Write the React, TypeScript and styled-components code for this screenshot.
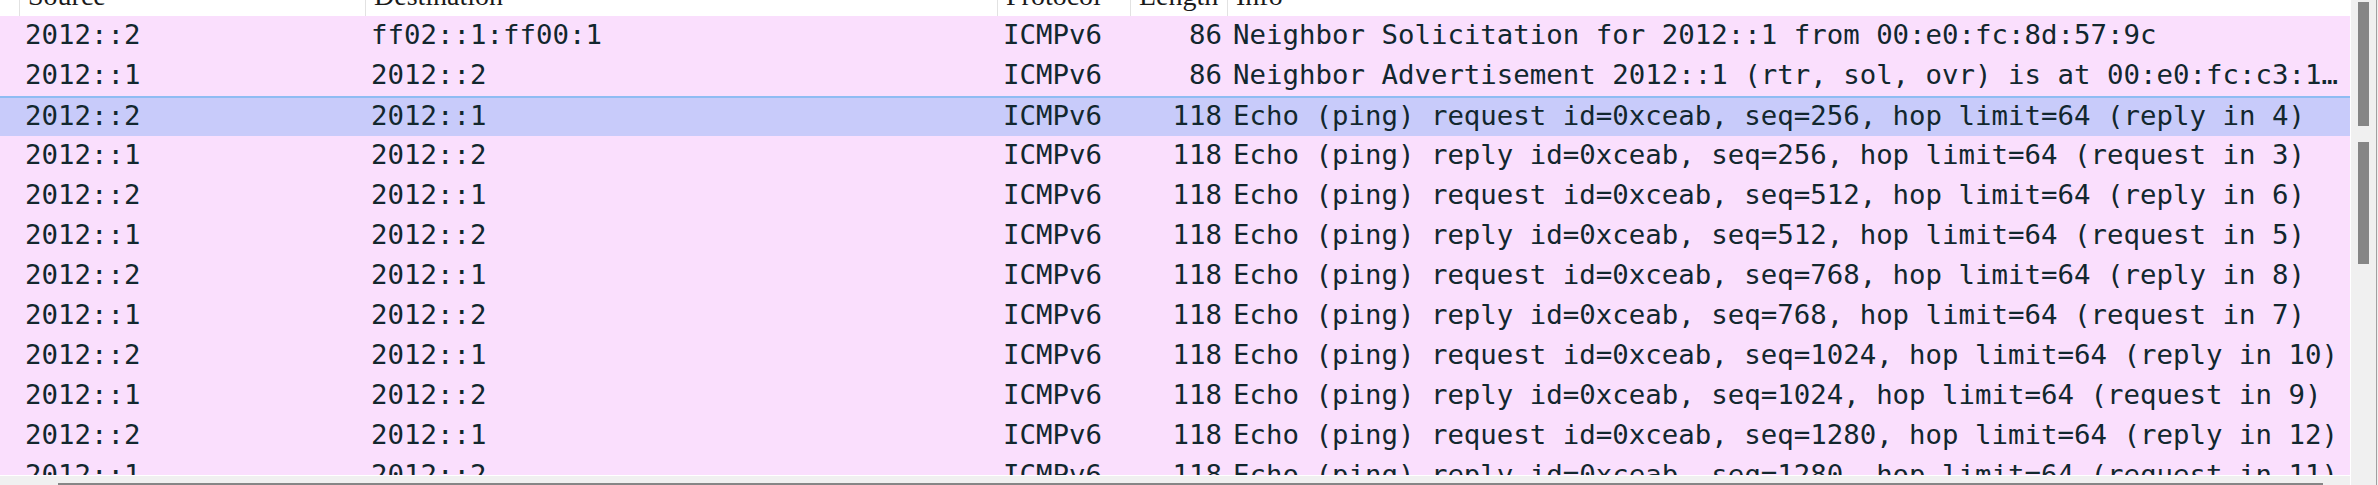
import React from "react";
import styled, { createGlobalStyle } from "styled-components";

const GlobalStyle = createGlobalStyle`
  html, body { margin: 0; padding: 0; background: #ffffff; overflow: hidden; }
  #root { width: 2378px; height: 485px; }
`;

const COLS = "19px 346px 632px 133px 97px 1123px";

const Frame = styled.div`
  display: grid;
  grid-template-columns: 2350px 27px;
  grid-template-rows: 475px 10px;
  width: 2378px;
  height: 485px;
  overflow: hidden;
  background: #f0f0f0;
`;

const TableArea = styled.div`
  grid-column: 1;
  grid-row: 1;
  display: flex;
  flex-direction: column;
  overflow: hidden;
  background: #ffffff;
`;

const HeaderRow = styled.div`
  display: grid;
  grid-template-columns: ${COLS};
  height: 16px;
  flex: none;
  background: #ffffff;
`;

const HeaderCell = styled.div<{ $first?: boolean }>`
  box-sizing: border-box;
  border-left: ${(p) => (p.$first ? "none" : "1px solid #e2e2e2")};
  overflow: hidden;
  padding-left: 8px;
  font-family: "Liberation Serif", serif;
  font-size: 28px;
  line-height: 28px;
  color: #1a1a1a;
  white-space: nowrap;
`;

const HeaderLabel = styled.span`
  display: block;
  margin-top: -18px;
`;

const Row = styled.div<{ $selected?: boolean }>`
  display: grid;
  grid-template-columns: ${COLS};
  height: 40px;
  flex: none;
  box-sizing: border-box;
  background: ${(p) => (p.$selected ? "#c8cbfa" : "#fadffd")};
  border-top: ${(p) => (p.$selected ? "2px solid #8fbcf3" : "0 none")};
  font-family: "DejaVu Sans Mono", monospace;
  font-size: 27.4px;
  line-height: ${(p) => (p.$selected ? "36px" : "38px")};
  color: #12272e;
`;

const Cell = styled.div<{ $right?: boolean }>`
  box-sizing: border-box;
  padding: ${(p) => (p.$right ? "0 5px 0 0" : "0 0 0 6px")};
  text-align: ${(p) => (p.$right ? "right" : "left")};
  white-space: nowrap;
  overflow: hidden;
`;

const VScroll = styled.div`
  grid-column: 2;
  grid-row: 1 / span 2;
  box-sizing: border-box;
  border-left: 1px solid #ffffff;
  border-right: 1px solid #a0a0a0;
  background: #f0f0f0;
  display: flex;
  flex-direction: column;
  gap: 16px;
  padding: 2px 0 0 7px;
`;

const VThumb = styled.div<{ $h: number }>`
  width: 11px;
  height: ${(p) => p.$h}px;
  flex: none;
  background: #868686;
`;

const HScroll = styled.div`
  grid-column: 1;
  grid-row: 2;
  box-sizing: border-box;
  border-top: 1px solid #ffffff;
  background: #f0f0f0;
  padding: 7px 0 0 58px;
  overflow: hidden;
`;

const HThumb = styled.div`
  width: 2265px;
  height: 10px;
  background: #868686;
`;

type Packet = { src: string; dst: string; proto: string; len: string; info: string };

const echo = (kind: "request" | "reply", seq: number, other: number): string =>
  `Echo (ping) ${kind} id=0xceab, seq=${seq}, hop limit=64 (${kind === "request" ? "reply" : "request"} in ${other})`;

const packets: Packet[] = [
  { src: "2012::2", dst: "ff02::1:ff00:1", proto: "ICMPv6", len: "86", info: "Neighbor Solicitation for 2012::1 from 00:e0:fc:8d:57:9c" },
  { src: "2012::1", dst: "2012::2", proto: "ICMPv6", len: "86", info: "Neighbor Advertisement 2012::1 (rtr, sol, ovr) is at 00:e0:fc:c3:1…" },
  { src: "2012::2", dst: "2012::1", proto: "ICMPv6", len: "118", info: echo("request", 256, 4) },
  { src: "2012::1", dst: "2012::2", proto: "ICMPv6", len: "118", info: echo("reply", 256, 3) },
  { src: "2012::2", dst: "2012::1", proto: "ICMPv6", len: "118", info: echo("request", 512, 6) },
  { src: "2012::1", dst: "2012::2", proto: "ICMPv6", len: "118", info: echo("reply", 512, 5) },
  { src: "2012::2", dst: "2012::1", proto: "ICMPv6", len: "118", info: echo("request", 768, 8) },
  { src: "2012::1", dst: "2012::2", proto: "ICMPv6", len: "118", info: echo("reply", 768, 7) },
  { src: "2012::2", dst: "2012::1", proto: "ICMPv6", len: "118", info: echo("request", 1024, 10) },
  { src: "2012::1", dst: "2012::2", proto: "ICMPv6", len: "118", info: echo("reply", 1024, 9) },
  { src: "2012::2", dst: "2012::1", proto: "ICMPv6", len: "118", info: echo("request", 1280, 12) },
  { src: "2012::1", dst: "2012::2", proto: "ICMPv6", len: "118", info: echo("reply", 1280, 11) },
];

const headers = ["", "Source", "Destination", "Protocol", "Length", "Info"];

export default function App() {
  return (
    <>
      <GlobalStyle />
      <Frame>
        <TableArea>
          <HeaderRow>
            {headers.map((h, i) => (
              <HeaderCell key={i} $first={i === 0}>
                <HeaderLabel>{h}</HeaderLabel>
              </HeaderCell>
            ))}
          </HeaderRow>
          {packets.map((p, i) => (
            <Row key={i} $selected={i === 2}>
              <Cell />
              <Cell>{p.src}</Cell>
              <Cell>{p.dst}</Cell>
              <Cell>{p.proto}</Cell>
              <Cell $right>{p.len}</Cell>
              <Cell>{p.info}</Cell>
            </Row>
          ))}
        </TableArea>
        <VScroll>
          <VThumb $h={124} />
          <VThumb $h={122} />
        </VScroll>
        <HScroll>
          <HThumb />
        </HScroll>
      </Frame>
    </>
  );
}
